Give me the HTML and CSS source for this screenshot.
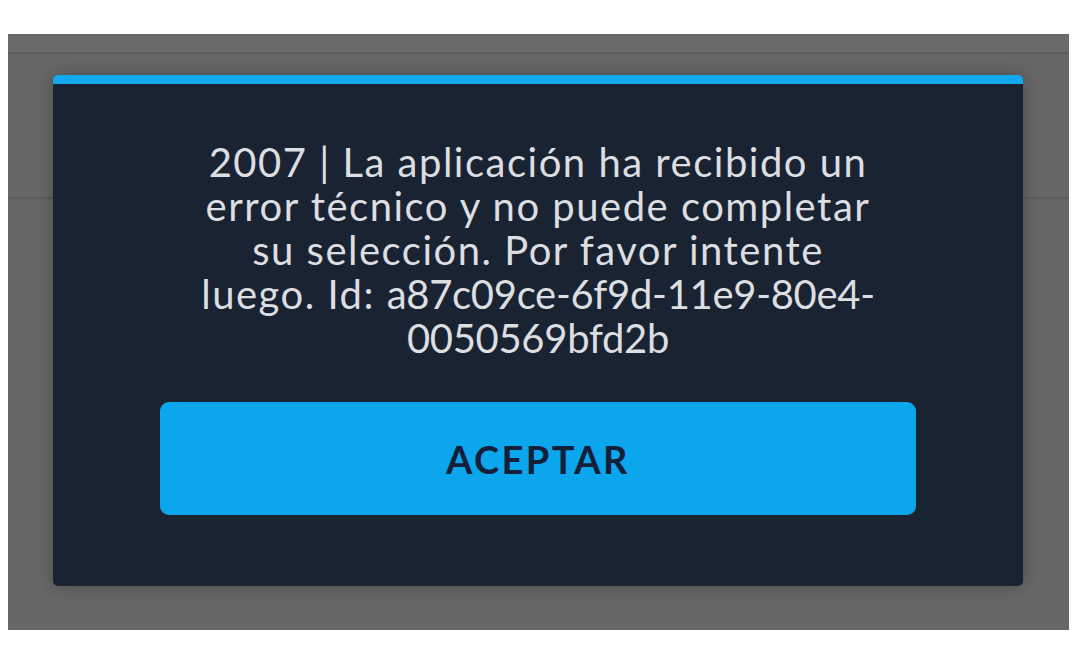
FILE: index.html
```html
<!DOCTYPE html>
<html lang="es">
<head>
<meta charset="utf-8">
<title>Error</title>
<link rel="stylesheet" href="styles.css">
</head>
<body>
<div class="screen">
  <div class="topbar"></div>
  <div class="row"></div>
  <div class="overlay">
    <div class="dialog">
      <p class="message">2007 | La aplicación ha recibido un<br>error técnico y no puede completar<br>su selección. Por favor intente<br>luego. Id: <span class="id">a87c09ce-6f9d-11e9-80e4-<br>0050569bfd2b</span></p>
      <button class="btn" type="button">ACEPTAR</button>
    </div>
  </div>
</div>
</body>
</html>
```
FILE: styles.css
```css
html, body {
  margin: 0;
  padding: 0;
  background: #ffffff;
}
body {
  padding: 34px 12px 36px 8px;
  font-family: Lato, "Open Sans", sans-serif;
}
.screen {
  position: relative;
  width: 1061px;
  height: 596px;
  background: #676767;
}
.topbar {
  height: 18px;
  background: #6a6a6a;
  border-bottom: 2px solid #5d5d5d;
}
.row {
  height: 143px;
  border-bottom: 2px solid #5d5d5d;
}
.overlay {
  position: absolute;
  left: 45px;
  top: 41px;
  width: 970px;
}
.dialog {
  background: #1a2332;
  border-top: 9px solid #12a9f0;
  border-radius: 5px;
  box-shadow: 0 0 18px rgba(0, 0, 0, 0.28);
  padding: 56px 100px 71px;
  display: flex;
  flex-direction: column;
  align-items: stretch;
}
.message {
  margin: 0;
  text-align: center;
  color: #dcdee1;
  font-size: 40px;
  line-height: 44px;
  font-weight: 400;
  letter-spacing: 1.5px;
}
.id {
  letter-spacing: -0.3px;
}
.btn {
  margin: 42px 7px 0;
  height: 113px;
  border: 0;
  border-radius: 9px;
  background: #0ba6ec;
  color: #14203a;
  font-family: Lato, "Open Sans", sans-serif;
  font-weight: 700;
  font-size: 38px;
  letter-spacing: 2.4px;
  padding: 0;
  cursor: pointer;
}
```
